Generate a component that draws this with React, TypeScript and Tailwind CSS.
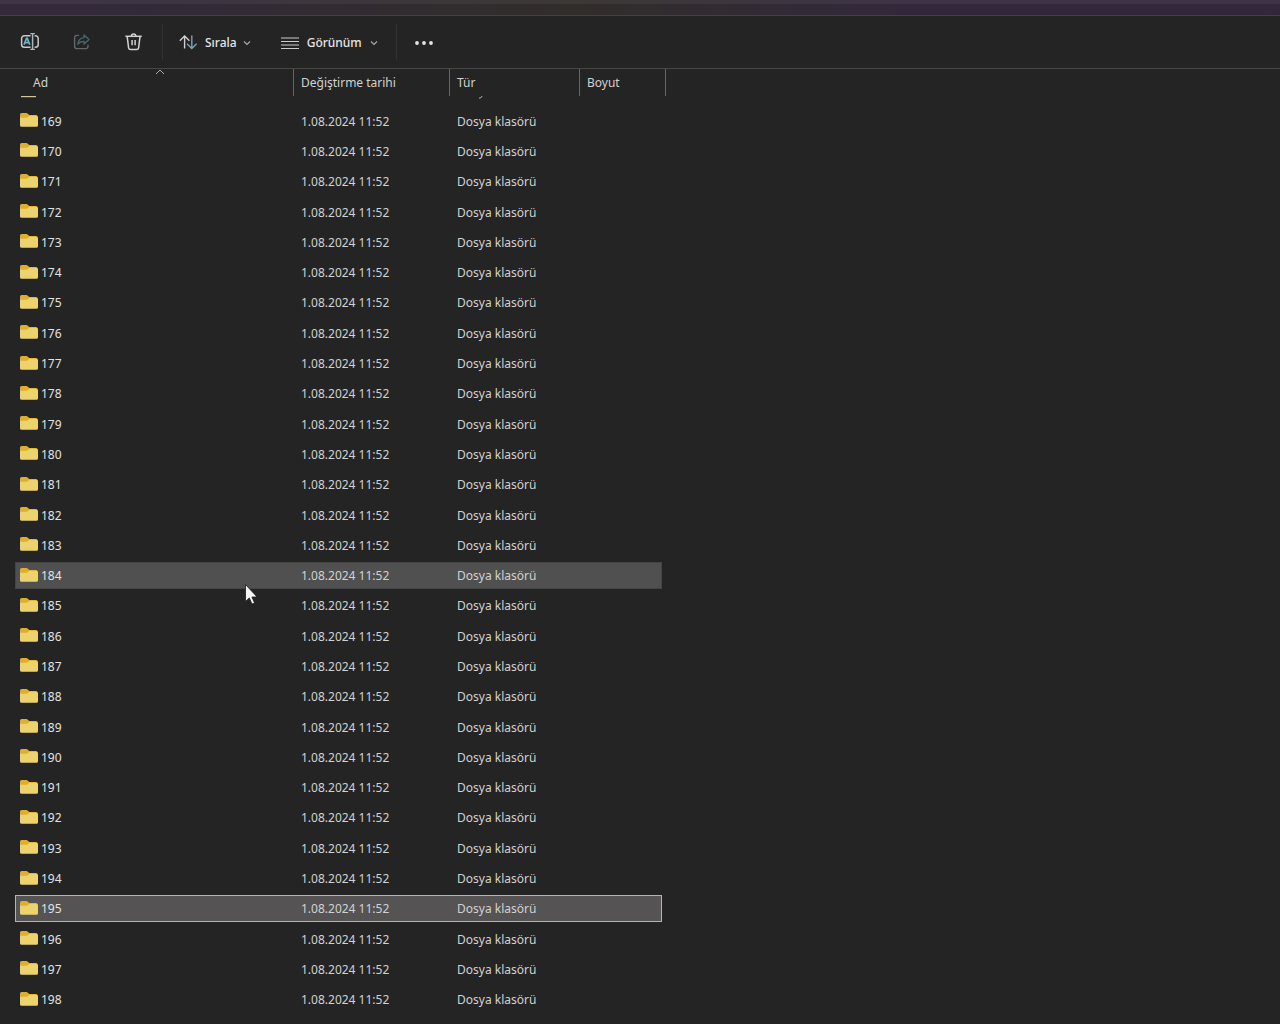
import React from 'react';

interface Folder {
  name: string;
  modified: string;
  type: string;
}

type RowState = 'idle' | 'hover' | 'selected';

const folders: Folder[] = Array.from({ length: 30 }, (_, i) => ({
  name: String(169 + i),
  modified: '1.08.2024 11:52',
  type: 'Dosya klasörü',
}));

const HOVERED = '184';
const SELECTED = '195';

function RenameIcon() {
  return (
    <svg width="20" height="20" viewBox="0 0 20 20" fill="none" aria-hidden="true">
      <path
        d="M10.600 3.700H4.400A2.800 2.800 0 0 0 1.600 6.500v6a2.800 2.800 0 0 0 2.800 2.800h6.200M14.600 3.700h.8a2.800 2.800 0 0 1 2.800 2.800v6a2.800 2.800 0 0 1-2.800 2.800h-.8"
        stroke="#c6c8ca"
        strokeWidth="1.500"
      />
      <path d="M10.300 1.600h4.600M10.300 17.400h4.600" stroke="#a9b6bd" strokeWidth="1.300" />
      <path d="M12.600 1.600v15.800" stroke="#a9b6bd" strokeWidth="1.500" />
      <path d="m4 12.800 2.500-6.400h.8l2.500 6.400M4.900 10.700h4" stroke="#6fb0c9" strokeWidth="1.700" />
    </svg>
  );
}

function ShareIcon() {
  return (
    <svg width="20" height="20" viewBox="0 0 20 20" fill="none" aria-hidden="true">
      <path
        d="M7 3.400H5a2.400 2.400 0 0 0-2.400 2.400v8.400A2.400 2.400 0 0 0 5 16.600h8.600a2.400 2.400 0 0 0 2.400-2.400v-1.400"
        stroke="#646668"
        strokeWidth="1.400"
      />
      <path
        d="M12 2.900 17 7.500l-5 4.600V9.400c-2.800 0-4.700.8-6.200 2.800.3-3.600 2.400-6.200 6.200-6.600z"
        stroke="#456673"
        strokeWidth="1.400"
        strokeLinejoin="round"
      />
    </svg>
  );
}

function TrashIcon() {
  return (
    <svg width="20" height="20" viewBox="0 0 20 20" fill="none" stroke="#d2d2d2" aria-hidden="true">
      <path d="M1.400 4.300h16.400" strokeWidth="1.500" />
      <path d="M7.400 4.100a2.200 2.200 0 0 1 4.400 0" strokeWidth="1.500" />
      <path d="m3.200 4.600 1.400 11.200a2 2 0 0 0 2 1.700h6a2 2 0 0 0 2-1.700L16 4.600" strokeWidth="1.500" />
      <path d="M8.100 8v5.200M11.100 8v5.200" strokeWidth="1.500" />
    </svg>
  );
}

function SortIcon() {
  return (
    <svg width="20" height="20" viewBox="0 0 20 20" fill="none" strokeWidth="1.400" aria-hidden="true">
      <path d="M5.600 15.600V3M.8 7.800 5.600 3l4.800 4.800" stroke="#d0d0d0" />
      <path d="M12.800 2.600v12.800M8 10.800l4.800 4.800 4.800-4.800" stroke="#7aa3b4" />
    </svg>
  );
}

function ViewIcon() {
  return (
    <svg width="18" height="13" viewBox="0 0 18 13" stroke="#cccccc" aria-hidden="true">
      <path d="M0 1h18M0 4.500h18M0 8h18M0 11.500h18" strokeWidth="1.200" />
    </svg>
  );
}

function Chevron() {
  return (
    <svg width="8" height="6" viewBox="0 0 8 6" fill="none" stroke="#a8a8a8" aria-hidden="true">
      <path d="m1 1.500 3 3 3-3" strokeWidth="1.200" />
    </svg>
  );
}

function FolderIcon() {
  return (
    <svg className="shrink-0" width="20" height="18" viewBox="0 0 20 18" aria-hidden="true">
      <path d="M1 2.700Q1 1 2.600 1h4.800q.8 0 1.400.7L10.300 3H17q1.600 0 1.600 1.600V9H1z" fill="#dfae2c" />
      <path
        d="M1 5.700h6.600q.8 0 1.400-.6l1.400-1.300h6.800q1.800 0 1.800 1.600v7.800q0 1.600-1.600 1.600H2.600Q1 14.800 1 13.200z"
        fill="#ecd36e"
      />
    </svg>
  );
}

function Toolbar() {
  return (
    <div className="flex h-[53px] shrink-0 items-center border-b border-[#464646] pl-5 text-xs font-medium text-[#e6e6e6]">
      <div className="flex items-center gap-8">
        <button type="button" aria-label="Yeniden adlandır">
          <RenameIcon />
        </button>
        <button type="button" aria-label="Paylaş">
          <ShareIcon />
        </button>
        <button type="button" aria-label="Sil">
          <TrashIcon />
        </button>
      </div>
      <div className="ml-[18px] h-9 w-px bg-[#333333]" />
      <button type="button" className="ml-4 flex items-center gap-1.5 pt-0.5">
        <SortIcon />
        Sırala
        <Chevron />
      </button>
      <button type="button" className="ml-[30px] flex items-center gap-2 pt-0.5">
        <ViewIcon />
        Görünüm
        <Chevron />
      </button>
      <div className="ml-[18px] h-9 w-px bg-[#333333]" />
      <button type="button" aria-label="Daha fazla" className="ml-[18px] pt-0.5">
        <svg width="18" height="6" viewBox="0 0 18 6" fill="#e4e4e4" aria-hidden="true">
          <circle cx="2" cy="3" r="1.900" />
          <circle cx="9" cy="3" r="1.900" />
          <circle cx="16" cy="3" r="1.900" />
        </svg>
      </button>
    </div>
  );
}

const rowStyles: Record<RowState, string> = {
  idle: 'border-transparent',
  hover: 'border-[#454545] bg-[#505050]',
  selected: 'border-[#b4b4b4] bg-[#555354]',
};

function FolderRow({ folder, state }: { folder: Folder; state: RowState }) {
  const cell = `flex h-[27px] items-center border-y ${rowStyles[state]}`;

  return (
    <tr>
      <td>
        <div className={`${cell} gap-0.5 border-l pl-[3px] text-[#e2e2e2]`}>
          <FolderIcon />
          <span className="pt-px">{folder.name}</span>
        </div>
      </td>
      <td>
        <div className={`${cell} pt-px pl-[7px]`}>{folder.modified}</div>
      </td>
      <td>
        <div className={`${cell} pt-px pl-[7px]`}>{folder.type}</div>
      </td>
      <td>
        <div className={`${cell} mr-1 border-r`} />
      </td>
    </tr>
  );
}

// Bottom edge of the row that is scrolled under the header
function ScrolledRowEdge() {
  return (
    <tr className="h-[10px] align-top" aria-hidden="true">
      <td>
        <svg className="ml-[5px]" width="17" height="2" viewBox="0 0 17 2">
          <path d="M1 .6h15" stroke="#d2c79c" strokeWidth="1.200" />
        </svg>
      </td>
      <td />
      <td>
        <svg className="ml-7" width="6" height="4" viewBox="0 0 6 4" fill="none">
          <path d="M1 2.200Q3 2.500 4.200 0" stroke="#b8b8b8" />
        </svg>
      </td>
      <td />
    </tr>
  );
}

function getState(name: string): RowState {
  if (name === HOVERED) return 'hover';
  if (name === SELECTED) return 'selected';
  return 'idle';
}

export default function App() {
  const heading = 'border-r border-[#666666] pt-px text-left font-normal';

  return (
    <div className="relative flex h-screen flex-col overflow-hidden bg-[#242424] font-['Noto_Sans','Open_Sans',sans-serif] text-xs text-[#d2d2d2]">
      <div className="h-4 shrink-0 border-b border-[#444046] bg-linear-to-r from-[#33293b] from-5% via-[#312d2a] via-45% to-[#33283b] to-70%">
        <div className="h-1 bg-white/5" />
      </div>
      <Toolbar />
      <main className="min-h-0 flex-1 pb-[9px] pl-[15px]">
        <table className="h-full w-[651px] table-fixed border-separate border-spacing-0">
          <colgroup>
            <col className="w-[279px]" />
            <col className="w-[156px]" />
            <col className="w-[130px]" />
            <col className="w-[86px]" />
          </colgroup>
          <thead>
            <tr className="h-[27px]">
              <th className={`${heading} relative pl-[18px]`}>
                <svg
                  className="absolute top-0 left-[140px]"
                  width="10"
                  height="6"
                  viewBox="0 0 10 6"
                  fill="none"
                  stroke="#b0b0b0"
                  aria-hidden="true"
                >
                  <path d="m1 5 4-4 4 4" />
                </svg>
                Ad
              </th>
              <th className={`${heading} pl-[7px]`}>Değiştirme tarihi</th>
              <th className={`${heading} pl-[7px]`}>Tür</th>
              <th className={`${heading} pl-[7px]`}>Boyut</th>
            </tr>
          </thead>
          <tbody>
            <ScrolledRowEdge />
            {folders.map((folder) => (
              <FolderRow key={folder.name} folder={folder} state={getState(folder.name)} />
            ))}
          </tbody>
        </table>
      </main>
      <svg
        className="pointer-events-none absolute top-[583px] left-[244px]"
        width="14"
        height="24"
        viewBox="0 0 14 24"
        aria-hidden="true"
      >
        <path
          d="M1.500 1.500v17l3.800-3.600 2.700 6.200 2.600-1.100-2.700-6h5.200z"
          fill="#f4f4f4"
          stroke="#1a1a1a"
          strokeWidth=".8"
        />
      </svg>
    </div>
  );
}
